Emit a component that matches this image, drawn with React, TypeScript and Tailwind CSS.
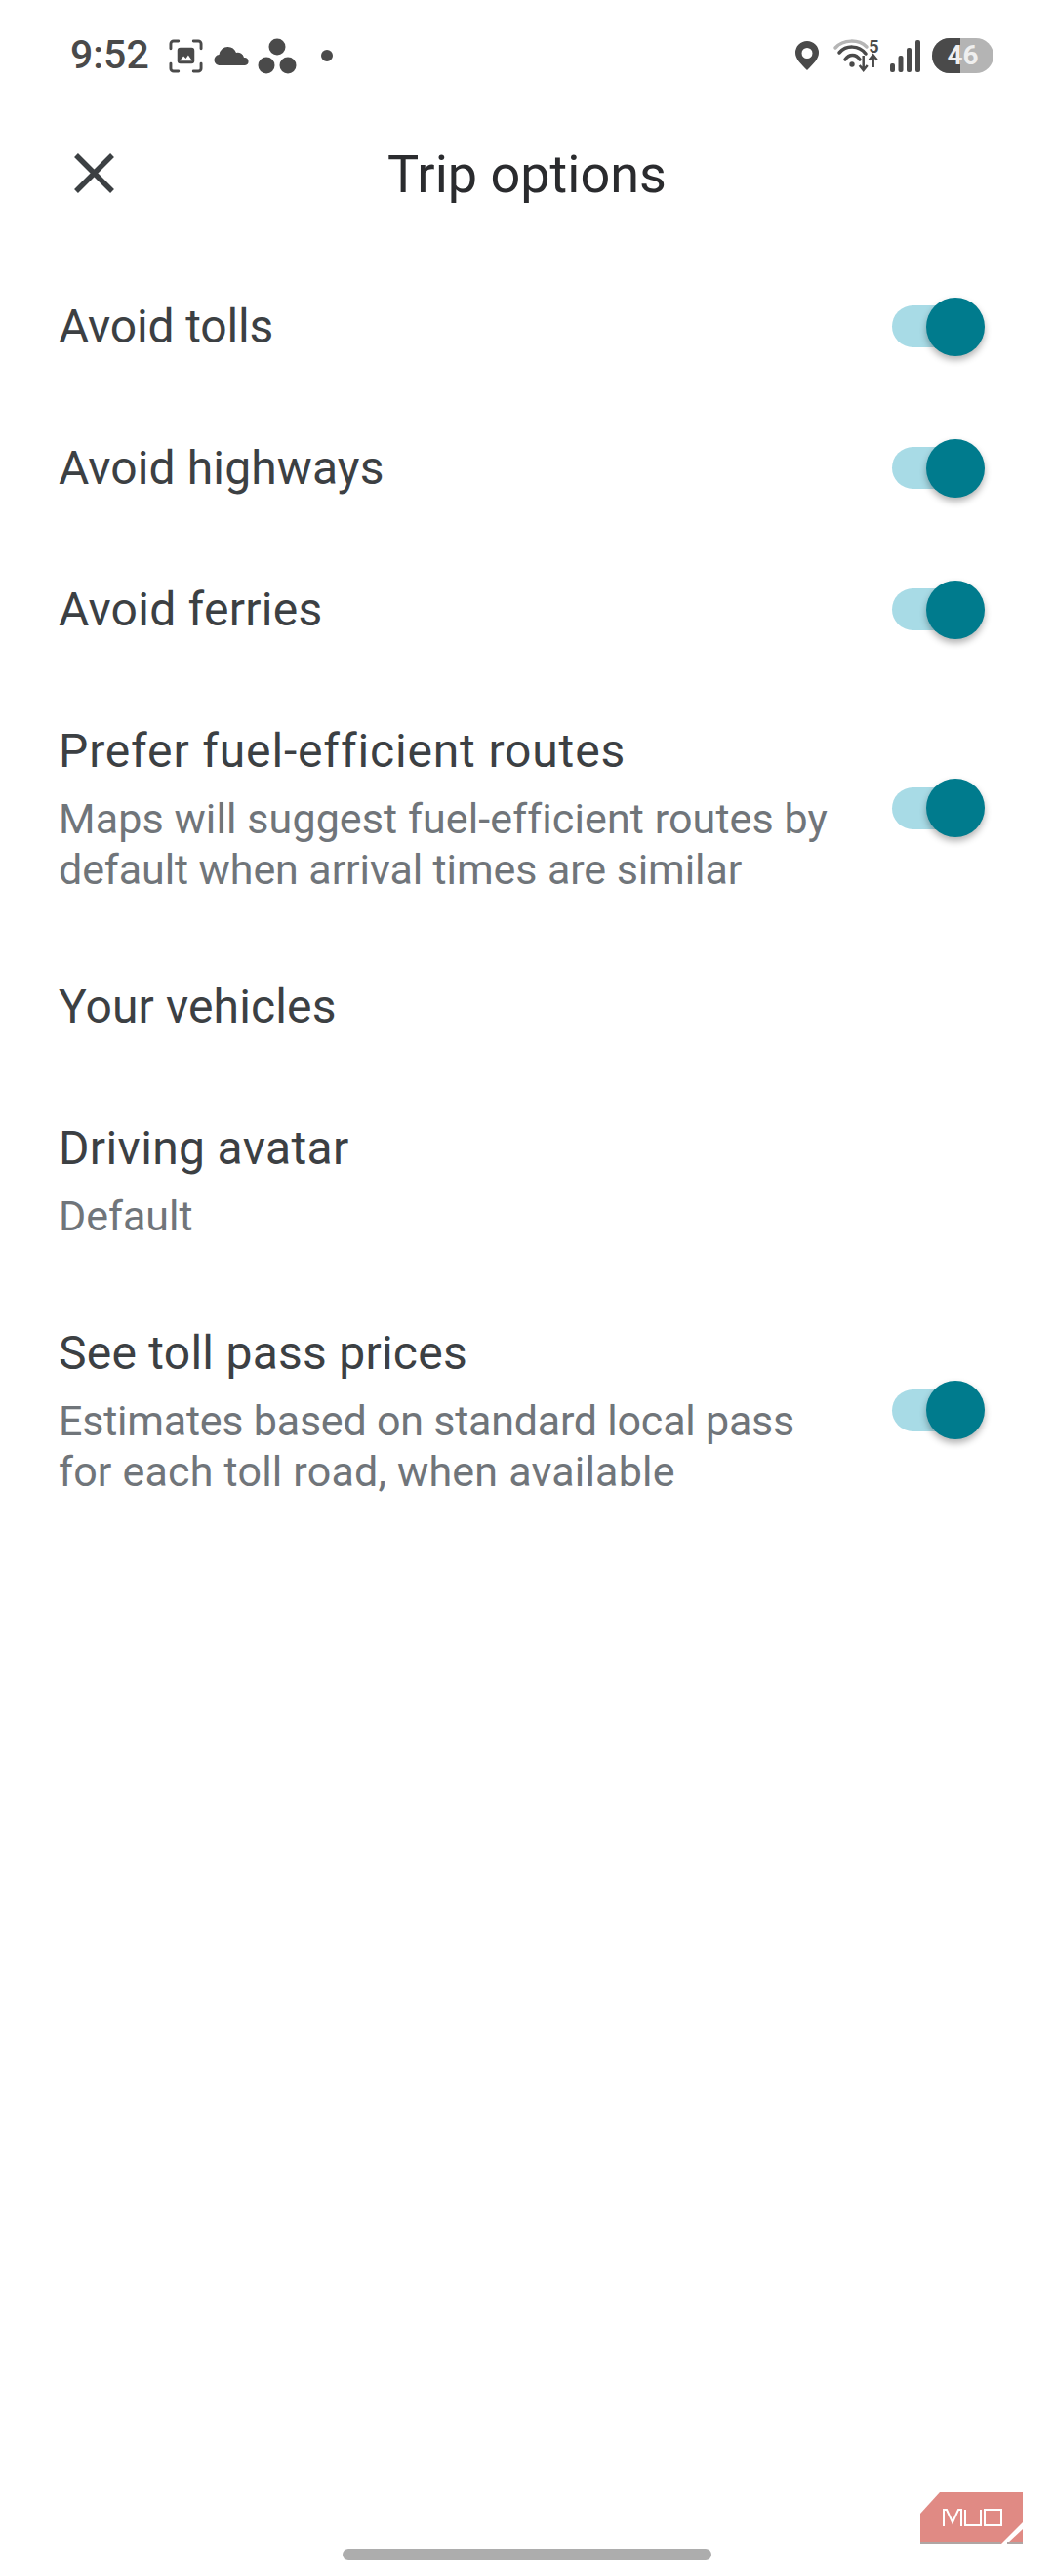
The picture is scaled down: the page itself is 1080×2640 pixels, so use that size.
import React from 'react';

const Toggle = () => (
  <div className="relative w-[95px] h-[60px] shrink-0 flex items-center">
    <div className="w-[86px] h-[43px] rounded-full bg-[#a8dbe6]" />
    <div className="absolute right-0 top-0 w-[60px] h-[60px] rounded-full bg-[#007b8d] shadow-[0_4px_7px_rgba(0,0,0,0.3)]" />
  </div>
);

type Line = { text: string; track: string };
type Option = { title: string; track: string; sub?: Line[]; toggle?: boolean };

// tracking per line: the reference font runs slightly different widths than Roboto
const options: Option[] = [
  { title: 'Avoid tolls', track: 'tracking-[-0.15px]', toggle: true },
  { title: 'Avoid highways', track: 'tracking-[0.12px]', toggle: true },
  { title: 'Avoid ferries', track: 'tracking-[0.26px]', toggle: true },
  {
    title: 'Prefer fuel-efficient routes',
    track: 'tracking-[0.85px]',
    sub: [
      { text: 'Maps will suggest fuel-efficient routes by', track: 'tracking-[0.1px]' },
      { text: 'default when arrival times are similar', track: 'tracking-[-0.09px]' },
    ],
    toggle: true,
  },
  { title: 'Your vehicles', track: 'tracking-[0.13px]' },
  { title: 'Driving avatar', track: 'tracking-[0.36px]', sub: [{ text: 'Default', track: 'tracking-normal' }] },
  {
    title: 'See toll pass prices',
    track: 'tracking-[0.25px]',
    sub: [
      { text: 'Estimates based on standard local pass', track: 'tracking-[-0.22px]' },
      { text: 'for each toll road, when available', track: 'tracking-[0.2px]' },
    ],
    toggle: true,
  },
];

const StatusBar = () => (
  <div className="h-[114px] flex items-center justify-between pl-[72px] pr-[62px] text-[#4a4a4a]">
    <div className="flex items-center">
      <span className="w-[81px] text-[41px] font-medium font-['Roboto',sans-serif]">9:52</span>
      <svg className="ml-[20px]" width="35" height="35" viewBox="0 0 36 36" fill="none">
        <path d="M2 10V5a3 3 0 0 1 3-3h5M26 2h5a3 3 0 0 1 3 3v5M34 26v5a3 3 0 0 1-3 3h-5M10 34H5a3 3 0 0 1-3-3v-5" stroke="currentColor" strokeWidth="3" strokeLinecap="round" />
        <rect x="9" y="9" width="18" height="17" rx="3" fill="currentColor" />
        <path d="M11.5 23l4-5 2.5 2.5 2.5-3.5 4 6z" fill="#fff" />
      </svg>
      <svg className="ml-[11px]" width="37" height="20" viewBox="0 0 36 20" fill="currentColor">
        <path d="M6 20a5.500 5.500 0 0 1-1-11 9 9 0 0 1 9-8 9.500 9.500 0 0 1 8.500 6 6.500 6.500 0 0 1 8 5 4 4 0 0 1 1 8z" />
      </svg>
      <svg className="ml-[8px]" width="40" height="37" viewBox="0 0 40 37" fill="currentColor">
        <circle cx="20" cy="9" r="8.500" />
        <circle cx="9" cy="28" r="8.500" />
        <circle cx="31" cy="28" r="8.500" />
      </svg>
      <div className="ml-[25px] w-[12px] h-[12px] rounded-full bg-[#4a4a4a]" />
    </div>
    <div className="flex items-center">
      <svg width="24" height="30" viewBox="0 0 24 30" fill="currentColor">
        <path fillRule="evenodd" d="M12 0a12 12 0 0 1 12 12c0 6-5 11-12 18C5 23 0 18 0 12A12 12 0 0 1 12 0zm0 7a5.500 5.500 0 1 0 0 11 5.500 5.500 0 0 0 0-11z" />
      </svg>
      <svg className="ml-[15px] overflow-visible" width="48" height="34" viewBox="0 0 48 34" fill="none" stroke="currentColor">
        <path d="M2 9C10 0 26 0 34 8" stroke="#b5b5b5" strokeWidth="3.500" strokeLinecap="round" />
        <path d="M6 14C13 6 26 6 33 15" strokeWidth="3.500" strokeLinecap="round" />
        <path d="M12 21C16 15 23 15 27 21" strokeWidth="3.500" strokeLinecap="round" />
        <circle cx="19" cy="26" r="2.700" fill="currentColor" stroke="none" />
        <path d="M30.700 17V32.500M26.700 27l4 5 4-5M40.700 29V16.500M36.700 21.500l4-5 4 5" strokeWidth="2.500" />
        <text x="41.500" y="14" fontSize="18" fontWeight="700" textAnchor="middle" fontFamily="Roboto, sans-serif" fill="currentColor" stroke="none">5</text>
      </svg>
      <svg className="ml-[10px]" width="31" height="33" viewBox="0 0 31 33" fill="currentColor">
        <rect x="0" y="24" width="5" height="9" rx="2" />
        <rect x="8.500" y="16" width="5" height="17" rx="2" />
        <rect x="17" y="8" width="5" height="25" rx="2" />
        <rect x="26" y="0" width="5" height="33" rx="2" />
      </svg>
      <div className="ml-[12px] relative w-[63px] h-[36px] rounded-full overflow-hidden bg-[#b4b4b4]">
        <div className="w-[29px] h-full bg-[#4a4a4a]" />
        <span className="absolute inset-0 flex items-center justify-center text-[28px] font-bold text-[#efefef] font-['Roboto',sans-serif]">46</span>
      </div>
    </div>
  </div>
);

export default function App() {
  return (
    <div className="relative w-[1080px] h-[2640px] overflow-hidden bg-white font-['Roboto',sans-serif]">
      <StatusBar />

      <header className="relative h-[128px] flex items-center justify-center">
        <svg className="absolute left-[76px] top-[43px] text-[#3c4043]" width="41" height="41" viewBox="0 0 41 41" fill="none" stroke="currentColor" strokeWidth="5.500">
          <path d="M2 2L39 39M39 2L2 39" />
        </svg>
        <h1 className="text-[54px] text-[#2a2b2e]">Trip options</h1>
      </header>

      <div className="mt-[20px]">
        {options.map((o) => (
          <div key={o.title} className="flex items-center justify-between pl-[60px] pr-[71px] py-[40px]">
            <div>
              <div className={`text-[48px] leading-[65px] text-[#3c4043] ${o.track}`}>{o.title}</div>
              {o.sub && (
                <div className="mt-[11px] mb-[2px] text-[43px] leading-[52px] text-[#70757a]">
                  {o.sub.map((line) => (
                    <div key={line.text} className={line.track}>{line.text}</div>
                  ))}
                </div>
              )}
            </div>
            {o.toggle && <Toggle />}
          </div>
        ))}
      </div>

      <div className="absolute bottom-[16px] left-[351px] w-[378px] h-[12px] rounded-full bg-[#adadad]" />

      <div className="absolute right-[32px] bottom-[33px]">
        <svg width="105" height="53" viewBox="0 0 105 53">
          <path d="M20 0H105V31L83 53H0V22z" fill="#e08a84" />
          <path d="M105 38V53H89z" fill="#e08a84" />
          <path d="M0 52H82.500M89 52H105" stroke="#b0a5a3" strokeWidth="2" />
          <path d="M24 35V18H27L33 31L39 18H42V35M46 18V34H62V18M66 18H83V34H66z" fill="none" stroke="#fff" strokeWidth="2" />
        </svg>
      </div>
    </div>
  );
}
